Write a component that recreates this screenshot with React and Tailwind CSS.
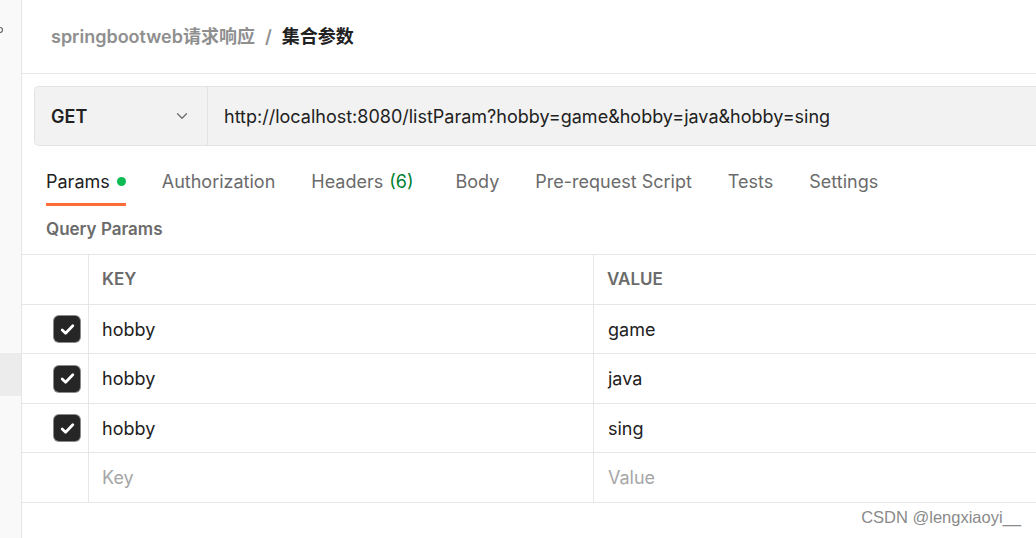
import { ChevronDown } from "lucide-react";

const tabs = [
  { label: "Params", active: true, dot: true },
  { label: "Authorization" },
  { label: "Headers", count: "(6)" },
  { label: "Body" },
  { label: "Pre-request Script" },
  { label: "Tests" },
  { label: "Settings" },
];

const rows = [
  { key: "hobby", value: "game", h: "h-[49px]" },
  { key: "hobby", value: "java", h: "h-[50px]" },
  { key: "hobby", value: "sing", h: "h-[49px]" },
];

const CheckBox = () => (
  <div className="w-[26px] h-[26px] rounded-[5px] bg-[#262626] flex items-center justify-center shadow-[0_0_0_1px_#8a8a8a]">
    <svg width="17" height="17" viewBox="0 0 16 16" fill="none">
      <path d="M3 8.5l3.2 3L13 4.5" stroke="white" strokeWidth="2.6" strokeLinecap="round" strokeLinejoin="round" />
    </svg>
  </div>
);

export default function App() {
  return (
    <div
      className="w-[1036px] h-[538px] flex overflow-hidden bg-white relative"
      style={{ fontFamily: "Inter, 'Noto Sans CJK SC', sans-serif" }}
    >
      {/* left rail */}
      <div className="w-[22px] shrink-0 bg-[#f9f9f9] border-r border-[#e6e6e6] flex flex-col">
        <svg width="6" height="10" viewBox="0 0 6 10" className="mt-[26px]">
          <path d="M0 1.5a2.5 2.5 0 1 1 0 5" stroke="#6b6b6b" strokeWidth="1.2" fill="none" />
        </svg>
        <div className="h-[317px]" />
        <div className="h-[43px] bg-[#ececec]" />
      </div>

      <div className="flex-1 min-w-0 flex flex-col">
        {/* breadcrumb */}
        <div className="h-[74px] shrink-0 border-b border-[#e6e6e6] flex items-center pl-[29px] text-[18px] font-semibold">
          <span className="text-[#8f8f8f]">springbootweb请求响应</span>
          <span className="text-[#8f8f8f] mx-[10px]">/</span>
          <span className="text-[#212121]">集合参数</span>
        </div>

        {/* url bar */}
        <div className="ml-[12px] mt-[12px] h-[60px] shrink-0 flex border border-r-0 border-[#e3e3e3] rounded-l-[5px] bg-[#f2f2f2]">
          <div className="w-[173px] shrink-0 flex items-center justify-between pl-[16px] pr-[16px] border-r border-[#e3e3e3]">
            <span className="text-[18px] font-semibold text-[#212121]">GET</span>
            <ChevronDown className="w-[18px] h-[18px] text-[#6b6b6b]" strokeWidth={1.6} />
          </div>
          <div className="flex items-center pl-[16px] text-[18px] text-[#212121] whitespace-nowrap">
            http://localhost:8080/listParam?hobby=game&amp;hobby=java&amp;hobby=sing
          </div>
        </div>

        {/* tabs */}
        <div className="flex pl-[24px] mt-[14px] h-[46px] shrink-0">
          {tabs.map((t) => (
            <div
              key={t.label}
              className={`flex items-center mr-[36px] border-b-[3px] whitespace-nowrap text-[18px] ${
                t.active ? "border-[#ff6c37] text-[#212121]" : "border-transparent text-[#6b6b6b]"
              }`}
            >
              {t.label}
              {t.dot && <span className="ml-[7px] w-[9px] h-[9px] rounded-full bg-[#0cbb52]" />}
              {t.count && <span className="ml-[6px] mr-[6px] text-[#007f31]">{t.count}</span>}
            </div>
          ))}
        </div>

        <div className="pl-[24px] h-[48px] shrink-0 flex items-center text-[17px] font-semibold text-[#6b6b6b]">
          Query Params
        </div>

        {/* table */}
        <div className="border-t border-[#e6e6e6]">
          <div className="flex h-[50px] border-b border-[#e6e6e6]">
            <div className="w-[67px] shrink-0 border-r border-[#e6e6e6]" />
            <div className="w-[505px] shrink-0 border-r border-[#e6e6e6] pl-[13px] flex items-center text-[17px] font-semibold text-[#6b6b6b]">
              KEY
            </div>
            <div className="flex-1 pl-[13px] flex items-center text-[17px] font-semibold text-[#6b6b6b]">VALUE</div>
          </div>
          {rows.map((r) => (
            <div key={r.value} className={`flex ${r.h} border-b border-[#e6e6e6]`}>
              <div className="w-[67px] shrink-0 border-r border-[#e6e6e6] flex items-center justify-end pr-[8px]">
                <CheckBox />
              </div>
              <div className="w-[505px] shrink-0 border-r border-[#e6e6e6] pl-[13px] flex items-center text-[18px] text-[#212121]">
                {r.key}
              </div>
              <div className="flex-1 pl-[14px] flex items-center text-[18px] text-[#212121]">{r.value}</div>
            </div>
          ))}
          <div className="flex h-[50px] border-b border-[#e6e6e6]">
            <div className="w-[67px] shrink-0 border-r border-[#e6e6e6]" />
            <div className="w-[505px] shrink-0 border-r border-[#e6e6e6] pl-[13px] flex items-center text-[18px] text-[#a6a6a6]">
              Key
            </div>
            <div className="flex-1 pl-[14px] flex items-center text-[18px] text-[#a6a6a6]">Value</div>
          </div>
        </div>
      </div>

      <div
        className="absolute right-[15px] bottom-[8px] text-[16.5px] text-[#8a8a8a]"
        style={{ fontFamily: "'Liberation Sans', sans-serif" }}
      >
        CSDN @lengxiaoyi__
      </div>
    </div>
  );
}
